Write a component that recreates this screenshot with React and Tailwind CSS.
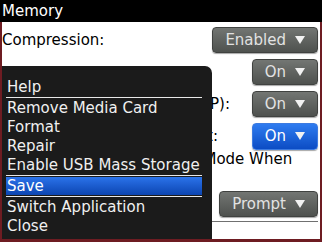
import React from "react";

function Tri() {
  return (
    <svg width="10" height="8" viewBox="0 0 10 8" className="shrink-0">
      <polygon points="0,0 10,0 5,8" fill="#f2f2f2" />
    </svg>
  );
}

function Choice({ label, blue }) {
  const cls = blue
    ? "h-[27px] rounded-[4px] border border-[#3d7be0] bg-linear-to-b from-[#2f7cf0] to-[#0c4cc4] text-white"
    : "h-[26px] rounded-[4px] border border-[#404240] bg-linear-to-b from-[#737673] to-[#4e514e] text-[#e2e2e2]";
  return (
    <div
      className={
        cls +
        " flex items-center pl-[12px] pr-[12px] gap-[9px] text-[15px] leading-[19px] shadow-[0_1px_1px_rgba(0,0,0,0.35)]"
      }
    >
      <span>{label}</span>
      <Tri />
    </div>
  );
}

function Row({ label, value, blue, last, labelPad }) {
  return (
    <div className={"flex items-center justify-between h-[26px] " + (last ? "" : "mb-[6px]")}>
      <span className={"text-[15px] leading-[19px] text-black whitespace-nowrap " + (labelPad ? "pt-[2px]" : "")}>
        {label}
      </span>
      <Choice label={value} blue={blue} />
    </div>
  );
}

function Item({ children }) {
  return <div className="h-[19px] leading-[19px] pl-[1px] whitespace-nowrap">{children}</div>;
}

function Sep() {
  return <div className="h-[1px] bg-[#e8e8e8]" />;
}

export default function App() {
  return (
    <div
      className="w-[322px] h-[242px] bg-white flex flex-col overflow-hidden"
      style={{ fontFamily: '"DejaVu Sans", sans-serif' }}
    >
      <div className="h-[22px] shrink-0 bg-black text-white text-[15px] leading-[22px] pl-[2px]">Memory</div>
      <div className="relative flex-1 border-x-2 border-b-[3px] border-[#6e1c22] flex flex-col pt-[5px] pr-[2px]">
        <Row label="Compression:" value="Enabled" />
        <Row label="Media Card Support:" value="On" labelPad />
        <Row label="Media Transfer Protocol (MTP):" value="On" />
        <Row label="Mass Storage Mode Support:" value="On" blue last />
        <div className="mt-[1px] text-[15px] leading-[19px] text-black pr-[10px]">
          Auto Enable Mass Storage Mode When Connected:
        </div>
        <div className="flex justify-end mt-[3px]">
          <Choice label="Prompt" />
        </div>
        <div className="mt-[4px] h-[1px] bg-[#707070]" />

        <div className="absolute left-0 top-[44px] bottom-0 w-[210px] bg-[#1b1b1b] rounded-tr-[7px] pt-[12px] text-[15px] text-[#f0f0f0]">
          <div className="ml-[4px] w-[196px] flex flex-col">
            <Item>Help</Item>
            <Sep />
            <div className="h-[1px]" />
            <Item>Remove Media Card</Item>
            <Item>Format</Item>
            <Item>Repair</Item>
            <Item>Enable USB Mass Storage</Item>
            <Sep />
            <div className="h-[1px]" />
            <div className="h-[18px] leading-[18px] pl-[1px] bg-linear-to-b from-[#2b73ea] to-[#0c45b2] text-white">
              Save
            </div>
            <div className="h-[1px]" />
            <Sep />
            <div className="h-[1px]" />
            <Item>Switch Application</Item>
            <Item>Close</Item>
          </div>
        </div>
      </div>
    </div>
  );
}
